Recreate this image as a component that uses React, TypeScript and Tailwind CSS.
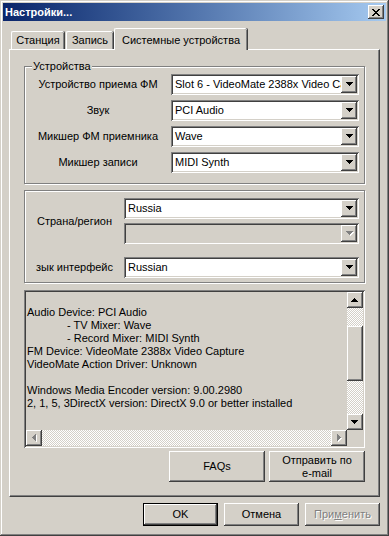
import type { ReactNode } from 'react'

const raised =
  'shadow-[inset_-1px_-1px_#404040,inset_1px_1px_#fff,inset_-2px_-2px_#808080,inset_2px_2px_#d4d0c8]'
const sunken =
  'shadow-[inset_1px_1px_#808080,inset_-1px_-1px_#fff,inset_2px_2px_#404040,inset_-2px_-2px_#d4d0c8]'
const checker = 'bg-[repeating-conic-gradient(#fff_0_25%,#d4d0c8_0_50%)] bg-[length:2px_2px]'

function Arrow({ dir, disabled }: { dir: 'up' | 'down' | 'left' | 'right'; disabled?: boolean }) {
  const rows = [
    [0, 7],
    [1, 5],
    [2, 3],
    [3, 1]
  ]
  const vertical = dir === 'up' || dir === 'down'
  const rects = rows.map(([off, len], i) => {
    const k = dir === 'down' || dir === 'right' ? i : 3 - i
    return vertical ? { x: off, y: k, w: len, h: 1 } : { x: k, y: off, w: 1, h: len }
  })
  const w = vertical ? 7 : 4
  const h = vertical ? 4 : 7
  return (
    <svg width={w + 1} height={h + 1} viewBox={`0 0 ${w + 1} ${h + 1}`} shapeRendering="crispEdges">
      {disabled && rects.map((r, i) => <rect key={'s' + i} x={r.x + 1} y={r.y + 1} width={r.w} height={r.h} fill="#fff" />)}
      {rects.map((r, i) => (
        <rect key={i} x={r.x} y={r.y} width={r.w} height={r.h} fill={disabled ? '#808080' : '#000'} />
      ))}
    </svg>
  )
}

function Combo({ text, width, disabled }: { text?: string; width: string; disabled?: boolean }) {
  return (
    <div className={`flex h-[21px] p-[2px] ${sunken} ${disabled ? 'bg-[#d4d0c8]' : 'bg-white'} ${width}`}>
      <span className="flex-1 overflow-hidden whitespace-nowrap pl-[2px] leading-[17px]">{text}</span>
      <span className={`flex w-[16px] items-center justify-center bg-[#d4d0c8] pl-[1px] ${raised}`}>
        <Arrow dir="down" disabled={disabled} />
      </span>
    </div>
  )
}

function Button({ children, className = '' }: { children: ReactNode; className?: string }) {
  return (
    <div className={`flex items-center justify-center bg-[#d4d0c8] text-center leading-[13px] ${raised} ${className}`}>
      {children}
    </div>
  )
}

function ScrollBtn({ dir, disabled }: { dir: 'up' | 'down' | 'left' | 'right'; disabled?: boolean }) {
  return (
    <div className={`flex h-[16px] w-[16px] shrink-0 items-center justify-center bg-[#d4d0c8] ${raised}`}>
      <Arrow dir={dir} disabled={disabled} />
    </div>
  )
}

const infoLines: [string, boolean][] = [
  ['', false],
  ['Audio Device: PCI Audio', false],
  ['- TV Mixer: Wave', true],
  ['- Record Mixer: MIDI Synth', true],
  ['FM Device: VideoMate 2388x Video Capture', false],
  ['VideoMate Action Driver: Unknown', false],
  ['', false],
  ['Windows Media Encoder version: 9.00.2980', false],
  ['2, 1, 5, 3DirectX version: DirectX 9.0 or better installed', false]
]

export default function App() {
  return (
    <div
      className="flex h-[536px] w-[389px] flex-col bg-[#d4d0c8] p-[3px] font-['Liberation_Sans',Arial,sans-serif] text-[11px] text-black shadow-[inset_-1px_-1px_#404040,inset_1px_1px_#d4d0c8,inset_-2px_-2px_#808080,inset_2px_2px_#fff]"
    >
      {/* title bar */}
      <div className="flex h-[18px] shrink-0 items-center justify-between bg-linear-to-r from-[#0a246a] to-[#a6caf0] pl-[2px] pr-[2px]">
        <span className="font-bold text-white">Настройки...</span>
        <div className={`flex h-[14px] w-[16px] items-center justify-center bg-[#d4d0c8] ${raised}`}>
          <svg width="8" height="7" viewBox="0 0 8 7" shapeRendering="crispEdges">
            <path d="M0 0h2v1H0zM6 0h2v1H6zM1 1h2v1H1zM5 1h2v1H5zM2 2h4v1H2zM3 3h2v1H3zM2 4h4v1H2zM1 5h2v1H1zM5 5h2v1H5zM0 6h2v1H0zM6 6h2v1H6z" fill="#000" />
          </svg>
        </div>
      </div>

      {/* tabs */}
      <div className="mx-[6px] mt-[7px] flex h-[21px] shrink-0 items-end pl-[2px]">
        <div className="flex h-[18px] w-[53px] items-center justify-center rounded-t-[2px] border-l border-t border-white shadow-[inset_-1px_0_#808080,1px_0_#404040]">
          Станция
        </div>
        <div className="ml-[2px] flex h-[18px] w-[47px] items-center justify-center rounded-t-[2px] border-l border-t border-white shadow-[inset_-1px_0_#808080,1px_0_#404040]">
          Запись
        </div>
        <div className="relative z-10 mb-[-1px] ml-[1px] flex h-[22px] w-[133px] items-start justify-center rounded-t-[2px] border-l border-t border-white bg-[#d4d0c8] pt-[3px] shadow-[inset_-1px_0_#808080,1px_0_#404040]">
          Системные устройства
        </div>
      </div>

      {/* panel */}
      <div className="mx-[6px] flex h-[448px] shrink-0 flex-col border border-b-[#404040] border-l-white border-r-[#404040] border-t-white px-[14px] pt-[16px] shadow-[inset_-1px_-1px_#808080]">
        {/* devices group */}
        <div className="relative flex h-[118px] flex-col gap-[5px] border border-[#808080] pr-[5px] pt-[7px] shadow-[inset_1px_1px_#fff,1px_1px_#fff]">
          <span className="absolute left-[7px] top-[-7px] bg-[#d4d0c8] px-[1px] leading-[13px]">Устройства</span>
          {[
            ['Устройство приема ФМ', 'Slot 6 - VideoMate 2388x Video Capture'],
            ['Звук', 'PCI Audio'],
            ['Микшер ФМ приемника', 'Wave'],
            ['Микшер записи', 'MIDI Synth']
          ].map(([label, value]) => (
            <div key={label} className="flex items-center">
              <span className="flex-1 text-center">{label}</span>
              <Combo text={value} width="w-[188px]" />
            </div>
          ))}
        </div>

        {/* region group */}
        <div className="mt-[6px] flex h-[93px] flex-col border border-[#808080] pr-[5px] pt-[7px] shadow-[inset_1px_1px_#fff,1px_1px_#fff]">
          <div className="flex items-center">
            <span className="flex-1 text-center">Страна/регион</span>
            <div className="flex flex-col gap-[4px]">
              <Combo text="Russia" width="w-[235px]" />
              <Combo width="w-[235px]" disabled />
            </div>
          </div>
          <div className="mt-[13px] flex items-center">
            <span className="flex-1 text-center">зык интерфейс</span>
            <Combo text="Russian" width="w-[235px]" />
          </div>
        </div>

        {/* info box */}
        <div className={`mt-[7px] flex h-[158px] flex-col p-[2px] ${sunken}`}>
          <div className="flex min-h-0 flex-1">
            <div className="flex-1 overflow-hidden whitespace-nowrap pl-[1px] pt-[1px] leading-[13px]">
              {infoLines.map(([line, indent], i) => (
                <div key={i} className={`h-[13px] ${indent ? 'pl-[40px]' : ''}`}>
                  {line}
                </div>
              ))}
            </div>
            <div className="flex w-[16px] flex-col">
              <ScrollBtn dir="up" />
              <div className={`flex flex-1 flex-col ${checker}`}>
                <div className="h-[18px]" />
                <div className={`h-[55px] bg-[#d4d0c8] ${raised}`} />
              </div>
              <ScrollBtn dir="down" />
            </div>
          </div>
          <div className="flex h-[16px]">
            <ScrollBtn dir="left" disabled />
            <div className={`flex-1 ${checker}`} />
            <ScrollBtn dir="right" disabled />
            <div className="w-[16px] bg-[#d4d0c8]" />
          </div>
        </div>

        {/* links */}
        <div className="mt-[3px] flex justify-end gap-[4px]">
          <Button className="h-[31px] w-[96px]">FAQs</Button>
          <Button className="h-[31px] w-[96px]">
            Отправить по
            <br />
            e-mail
          </Button>
        </div>
      </div>

      {/* dialog buttons */}
      <div className="mt-[6px] flex justify-end gap-[6px] pr-[6px]">
        <div className="flex h-[23px] w-[75px] border border-black">
          <Button className="flex-1">OK</Button>
        </div>
        <Button className="h-[23px] w-[75px]">Отмена</Button>
        <Button className="h-[23px] w-[75px] text-[#808080] [text-shadow:1px_1px_#fff]">
          <span>
            При<span className="underline">м</span>енить
          </span>
        </Button>
      </div>
    </div>
  )
}
